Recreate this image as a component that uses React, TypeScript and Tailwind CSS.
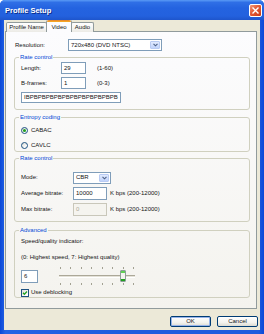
import React from 'react';

function CloseButton() {
  return (
    <div className="w-[13px] h-[13px] rounded-[2px] border border-white bg-[linear-gradient(135deg,#F29A7C_0%,#E25A35_45%,#C93A18_100%)] flex items-center justify-center">
      <svg width="7" height="7" viewBox="0 0 7 7">
        <path d="M1 1L6 6M6 1L1 6" stroke="white" strokeWidth="1.4" strokeLinecap="square" />
      </svg>
    </div>
  );
}

function Select({ value, width }: { value: string; width: string }) {
  return (
    <div className={`flex h-[12px] border border-[#7F9DB9] bg-white ${width}`}>
      <span className="flex-1 pl-[2px] flex items-center whitespace-nowrap">{value}</span>
      <span className="w-[10px] m-[1px] rounded-[1px] bg-[linear-gradient(180deg,#E1EAFE_0%,#C1D3FB_100%)] border border-[#B9CBF3] flex items-center justify-center">
        <svg width="5" height="4" viewBox="0 0 5 4">
          <path d="M0.5 0.8L2.5 2.8L4.5 0.8" stroke="#4D6185" strokeWidth="1.1" fill="none" />
        </svg>
      </span>
    </div>
  );
}

function TextBox({ value, width, height = 'h-[12px]', disabled = false }: { value: string; width: string; height?: string; disabled?: boolean }) {
  return (
    <div
      className={`${width} ${height} border flex items-center pl-[2px] overflow-hidden whitespace-nowrap ${
        disabled ? 'border-[#C9C7BA] bg-[#F5F4EF] text-[#ACA899]' : 'border-[#7F9DB9] bg-white'
      }`}
    >
      {value}
    </div>
  );
}

function Radio({ checked, label }: { checked?: boolean; label: string }) {
  return (
    <div className="h-[10px] flex items-center gap-[3px]">
      <span className="w-[7px] h-[7px] rounded-full border border-[#1C5180] bg-[linear-gradient(135deg,#DCDCD7_0%,#FFFFFF_80%)] flex items-center justify-center">
        {checked && <span className="w-[3px] h-[3px] rounded-full bg-[#21A121]" />}
      </span>
      <span>{label}</span>
    </div>
  );
}

function Group({ title, className, children }: { title: string; className: string; children: React.ReactNode }) {
  return (
    <fieldset className={`ml-[8px] mr-[6px] border border-[#D0D0BF] rounded-[3px] ${className}`}>
      <legend className="ml-[4px] px-[1px] text-[#0046D5] leading-[7px]">{title}</legend>
      {children}
    </fieldset>
  );
}

function Slider() {
  const ticks = [0, 1, 2, 3, 4, 5, 6, 7];
  return (
    <div className="relative ml-[19px] w-[80px] h-[18px] flex flex-col justify-between">
      <div className="flex justify-between px-[3px]">
        {ticks.map((t) => (
          <span key={t} className="w-px h-[2px] bg-[#A2A192]" />
        ))}
      </div>
      <div className="mx-[2px] h-[3px] border-t border-[#ACA899] border-b border-b-white bg-[#E4E2D8]" />
      <div className="flex justify-between px-[3px]">
        {ticks.map((t) => (
          <span key={t} className="w-px h-[2px] bg-[#A2A192]" />
        ))}
      </div>
      {/* thumb */}
      <div className="absolute left-[63px] top-[3px] w-[6px] h-[12px] rounded-[1px] border border-[#8E9D9A] bg-[#F4F4F0] flex flex-col justify-between">
        <span className="h-[2px] bg-[#5FCF56]" />
        <span className="h-[2px] bg-[#21A121]" />
      </div>
    </div>
  );
}

function Button({ label, isDefault }: { label: string; isDefault?: boolean }) {
  return (
    <div
      className={`w-[41px] h-[11px] rounded-[2px] border border-[#003C74] bg-[linear-gradient(180deg,#FFFFFF_0%,#F3F3EF_60%,#DCDBD2_100%)] flex items-center justify-center ${
        isDefault ? 'shadow-[inset_0_0_0_1px_#98B4EA]' : ''
      }`}
    >
      {label}
    </div>
  );
}

export default function App() {
  return (
    <div className="w-[264px] h-[334px] flex flex-col bg-[linear-gradient(90deg,#0A48D8_0%,#2463E4_2%,#1D5BDE_50%,#1D5BDE_98%,#0A48D8_100%)] rounded-t-[5px] overflow-hidden font-['Liberation_Sans',Arial,sans-serif] text-[6px] leading-[7px] text-[#141414]">
      {/* Title bar */}
      <div className="h-[20px] shrink-0 flex items-center justify-between pl-[5px] pr-[2px] bg-[linear-gradient(180deg,#5A9BF6_0%,#2F6FE6_12%,#2463E0_40%,#2361DE_80%,#1E55CC_100%)]">
        <span className="text-white font-bold text-[7.5px] leading-[9px] [text-shadow:1px_1px_0_#0B2F8C]">Profile Setup</span>
        <CloseButton />
      </div>

      {/* Client area */}
      <div className="flex-1 mx-[4px] mb-[4px] bg-[#ECE9D8] flex flex-col">
        {/* Tabs */}
        <div className="h-[12px] ml-[2px] flex items-end relative z-10 -mb-px">
          <div className="w-[41px] h-[10px] border border-b-0 border-[#919B9C] rounded-t-[2px] bg-[linear-gradient(180deg,#FFFFFF_0%,#ECEBE6_100%)] flex items-center justify-center">
            Profile Name
          </div>
          <div className="w-[26px] h-[12px] -mx-px border-x border-[#919B9C] rounded-t-[2px] bg-[#FCFCFE] flex flex-col">
            <span className="h-[2px] rounded-t-[2px] bg-[#F6A623] border-t border-[#E68B2C]" />
            <span className="flex-1 flex items-center justify-center">Video</span>
          </div>
          <div className="w-[23px] h-[10px] border border-b-0 border-[#919B9C] rounded-t-[2px] bg-[linear-gradient(180deg,#FFFFFF_0%,#ECEBE6_100%)] flex items-center justify-center">
            Audio
          </div>
        </div>

        {/* Tab page */}
        <div className="ml-[1px] mr-[3px] h-[278px] shrink-0 border border-[#919B9C] bg-[linear-gradient(180deg,#FCFCFE_0%,#F4F3EE_100%)] flex flex-col">
          <div className="mt-[7px] h-[12px] flex items-center pl-[9px]">
            <span className="w-[53px]">Resolution:</span>
            <Select value="720x480 (DVD NTSC)" width="w-[94px]" />
          </div>

          <Group title="Rate control" className="mt-[3px] pb-[6px]">
            <div className="pl-[6px] flex flex-col">
              <div className="mt-[1px] h-[12px] flex items-center">
                <span className="w-[40px]">Length:</span>
                <TextBox value="29" width="w-[25px]" />
                <span className="ml-[11px]">(1-60)</span>
              </div>
              <div className="mt-[3px] h-[12px] flex items-center">
                <span className="w-[40px]">B-frames:</span>
                <TextBox value="1" width="w-[25px]" />
                <span className="ml-[11px]">(0-3)</span>
              </div>
              <div className="mt-[3px]">
                <TextBox value="IBPBPBPBPBPBPBPBPBPBPBPB" width="w-[100px]" height="h-[11px]" />
              </div>
            </div>
          </Group>

          <Group title="Entropy coding" className="mt-[4px] pb-[1px]">
            <div className="pl-[6px] flex flex-col gap-[5px] mt-[4px]">
              <Radio checked label="CABAC" />
              <Radio label="CAVLC" />
            </div>
          </Group>

          <Group title="Rate control" className="mt-[3px] pb-[5px]">
            <div className="pl-[6px] flex flex-col">
              <div className="mt-[10px] h-[11px] flex items-center">
                <span className="w-[52px]">Mode:</span>
                <Select value="CBR" width="w-[38px]" />
              </div>
              <div className="mt-[4px] h-[13px] flex items-center">
                <span className="w-[52px]">Average bitrate:</span>
                <TextBox value="10000" width="w-[34px]" height="h-[13px]" />
                <span className="ml-[3px]">K bps (200-12000)</span>
              </div>
              <div className="mt-[3px] h-[13px] flex items-center">
                <span className="w-[52px]">Max bitrate:</span>
                <TextBox value="0" width="w-[34px]" height="h-[13px]" disabled />
                <span className="ml-[3px]">K bps (200-12000)</span>
              </div>
            </div>
          </Group>

          <Group title="Advanced" className="mt-[5px]">
            <div className="pl-[6px] flex flex-col">
              <div className="mt-[4px]">Speed/quality indicator:</div>
              <div className="mt-[9px]">(0: Highest speed, 7: Highest quality)</div>
              <div className="mt-[6px] h-[18px] flex items-center">
                <TextBox value="6" width="w-[17px]" height="h-[13px]" />
                <Slider />
              </div>
              <div className="mt-[3px] h-[9px] flex items-center gap-[2px]">
                <span className="w-[8px] h-[8px] border border-[#1C5180] bg-[linear-gradient(135deg,#DCDCD7_0%,#FFFFFF_80%)] flex items-center justify-center">
                  <svg width="6" height="6" viewBox="0 0 6 6">
                    <path d="M1 2.8L2.4 4.3L5 1.5" stroke="#21A121" strokeWidth="1.3" fill="none" />
                  </svg>
                </span>
                <span>Use deblocking</span>
              </div>
            </div>
          </Group>
        </div>

        {/* Dialog buttons */}
        <div className="mt-[7px] flex justify-end gap-[6px] pr-[2px]">
          <Button label="OK" isDefault />
          <Button label="Cancel" />
        </div>
      </div>
    </div>
  );
}
